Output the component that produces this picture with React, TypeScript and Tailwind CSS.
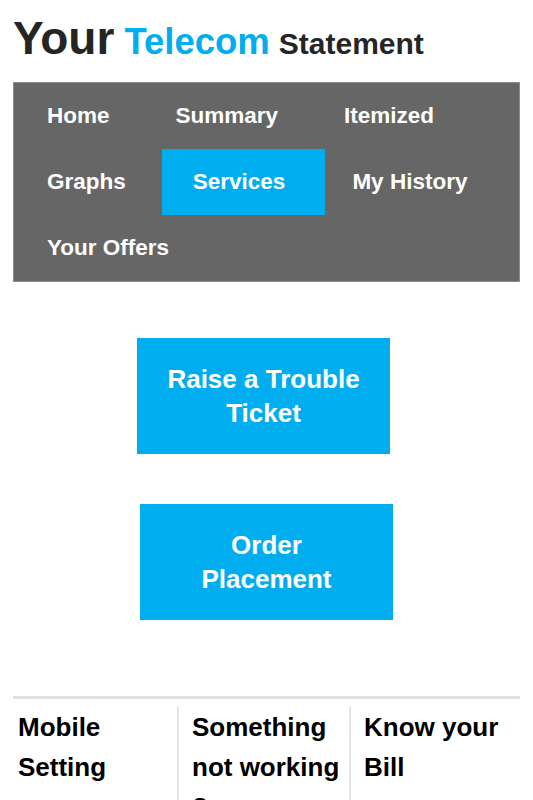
import React from 'react';

const navItems = [
  { label: 'Home', cls: 'px-[33px]' },
  { label: 'Summary', cls: 'px-[33px]' },
  { label: 'Itemized', cls: 'px-[33px]' },
  { label: 'Graphs', cls: 'px-[33px]' },
  { label: 'Services', cls: 'ml-[3px] pl-[31px] pr-[40px] bg-[#00aeef]' },
  { label: 'My History', cls: 'pl-[27px] pr-[33px]' },
  { label: 'Your Offers', cls: 'px-[33px]' },
];

const helpLinks = [
  { label: 'Mobile Setting', cls: 'pl-[5px] pr-[8px]' },
  { label: 'Something not working ?', cls: 'pl-[13px] pr-[6px] border-l-2 border-[#e2e2e2]' },
  { label: 'Know your Bill', cls: 'pl-[13px] pr-[6px] border-l-2 border-[#e2e2e2]' },
];

const App = () => {
  return (
    <div className="min-h-screen bg-white overflow-hidden font-['Liberation_Sans',Arial,sans-serif]">
      {/* Title */}
      <div className="h-[82px] pt-[15px] pl-[13px] flex items-baseline leading-none font-bold">
        <span className="text-[46px] text-[#252525]">Your</span>
        <span className="ml-[10px] text-[36.5px] text-[#00aeef]">Telecom</span>
        <span className="ml-[9px] text-[30px] text-[#252525]">Statement</span>
      </div>

      {/* Menu */}
      <nav className="ml-[13px] w-[507px] bg-[#666666] border border-[#8c8c8c] flex flex-wrap">
        {navItems.map((item) => (
          <a
            key={item.label}
            href="#"
            className={`h-[66px] flex items-center text-white font-bold text-[22.5px] whitespace-nowrap ${item.cls}`}
          >
            {item.label}
          </a>
        ))}
      </nav>

      {/* Service actions */}
      <div className="flex flex-col items-start mt-[56px]">
        <button className="ml-[137px] w-[253px] h-[116px] bg-[#00aeef] text-white font-bold text-[26px] leading-[34px] px-[20px]">
          Raise a Trouble Ticket
        </button>
        <button className="ml-[140px] mt-[50px] w-[253px] h-[116px] bg-[#00aeef] text-white font-bold text-[26px] leading-[34px] px-[40px]">
          Order Placement
        </button>
      </div>

      {/* Help links */}
      <div className="ml-[13px] w-[507px] mt-[76px] border-t-[3px] border-[#e0e0e0]">
        <div className="grid grid-cols-[164px_172px_171px] mt-[8px]">
          {helpLinks.map((link) => (
            <div key={link.label} className={`text-[26px] leading-[40px] font-bold text-black ${link.cls}`}>
              {link.label}
            </div>
          ))}
        </div>
      </div>
    </div>
  );
};

export default App;
